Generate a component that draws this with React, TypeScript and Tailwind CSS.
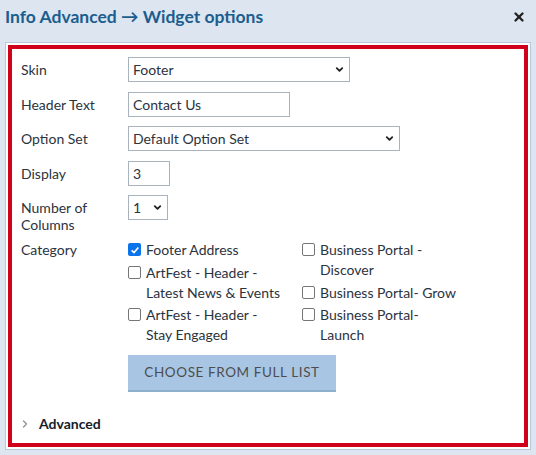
import { ChevronDown, ChevronRight, X } from "lucide-react";

const font = { fontFamily: "Lato, 'Noto Sans', sans-serif" };

function Box({ checked }: { checked?: boolean }) {
  if (checked) {
    return (
      <span className="mt-[3px] flex h-[13px] w-[13px] shrink-0 items-center justify-center rounded-[2px] bg-[#0b74ea]">
        <svg viewBox="0 0 12 12" className="h-[10px] w-[10px]">
          <path d="M2 6.5 L4.8 9 L10 3" fill="none" stroke="white" strokeWidth="2" />
        </svg>
      </span>
    );
  }
  return <span className="mt-[3px] h-[13px] w-[13px] shrink-0 rounded-[2px] border border-[#767676] bg-white" />;
}

function Check({ label, checked }: { label: string; checked?: boolean }) {
  return (
    <label className="flex gap-[5px]">
      <Box checked={checked} />
      <span className="w-[140px] leading-[20px]">{label}</span>
    </label>
  );
}

function Select({ value, width }: { value: string; width: string }) {
  return (
    <div className={`flex h-[25px] items-center justify-between border border-[#a9b3bd] bg-white pl-[4px] pr-[4px] ${width}`}>
      <span>{value}</span>
      <ChevronDown className="h-[11px] w-[11px] text-[#222]" strokeWidth={4} />
    </div>
  );
}

function Row({ label, children }: { label: string; children: React.ReactNode }) {
  return (
    <div className="flex">
      <div className="w-[107px] shrink-0 pt-[4px] leading-[17px]">{label}</div>
      {children}
    </div>
  );
}

export default function App() {
  return (
    <div className="flex h-[455px] w-[536px] flex-col bg-[#dce5f0] text-[14px] text-[#2b3340]" style={font}>
      <div className="flex h-[42px] items-start justify-between pl-[5px] pr-[10px] pt-[5px]">
        <h1 className="text-[17.5px] font-bold leading-[24px] text-[#1b5d8e]">Info Advanced → Widget options</h1>
        <X className="mt-[5px] h-[14px] w-[14px] text-[#222]" strokeWidth={4} />
      </div>
      <div className="mx-[5px] border border-[#b8c8d8] bg-white p-[2px]">
        <div className="flex h-[402px] flex-col border-4 border-[#d0021b] pl-[9px] pt-[8px]">
          <div className="flex flex-col gap-[9.5px]">
            <Row label="Skin">
              <Select value="Footer" width="w-[222px]" />
            </Row>
            <Row label="Header Text">
              <div className="flex h-[25px] w-[162px] items-center border border-[#a9b3bd] pl-[4px]">Contact Us</div>
            </Row>
            <Row label="Option Set">
              <Select value="Default Option Set" width="w-[272px]" />
            </Row>
            <Row label="Display">
              <div className="flex h-[25px] w-[42px] items-center border border-[#a9b3bd] pl-[4px]">3</div>
            </Row>
            <Row label="Number of Columns">
              <Select value="1" width="w-[40px]" />
            </Row>
          </div>
          <div className="mt-[7px] flex">
            <div className="w-[107px] shrink-0 leading-[20px]">Category</div>
            <div className="grid w-[350px] grid-cols-[174px_176px]">
              <div className="flex flex-col gap-[2.5px]">
                <Check label="Footer Address" checked />
                <Check label="ArtFest - Header - Latest News & Events" />
                <Check label="ArtFest - Header - Stay Engaged" />
              </div>
              <div className="flex flex-col gap-[2.5px]">
                <Check label="Business Portal - Discover" />
                <Check label="Business Portal- Grow" />
                <Check label="Business Portal- Launch" />
              </div>
            </div>
          </div>
          <div className="ml-[107px] mt-[10px]">
            <button className="h-[37px] w-[208px] border-b-2 border-[#8eb0cf] bg-[#a8c6e3] text-[13.5px] tracking-[0.6px] text-[#4d4d4d]">
              CHOOSE FROM FULL LIST
            </button>
          </div>
          <div className="mt-[21px] flex items-center gap-[8px]">
            <ChevronRight className="-ml-[2px] h-[12px] w-[12px] text-[#8a8f96]" strokeWidth={2.5} />
            <span className="font-bold text-[#15202b]">Advanced</span>
          </div>
        </div>
      </div>
    </div>
  );
}
